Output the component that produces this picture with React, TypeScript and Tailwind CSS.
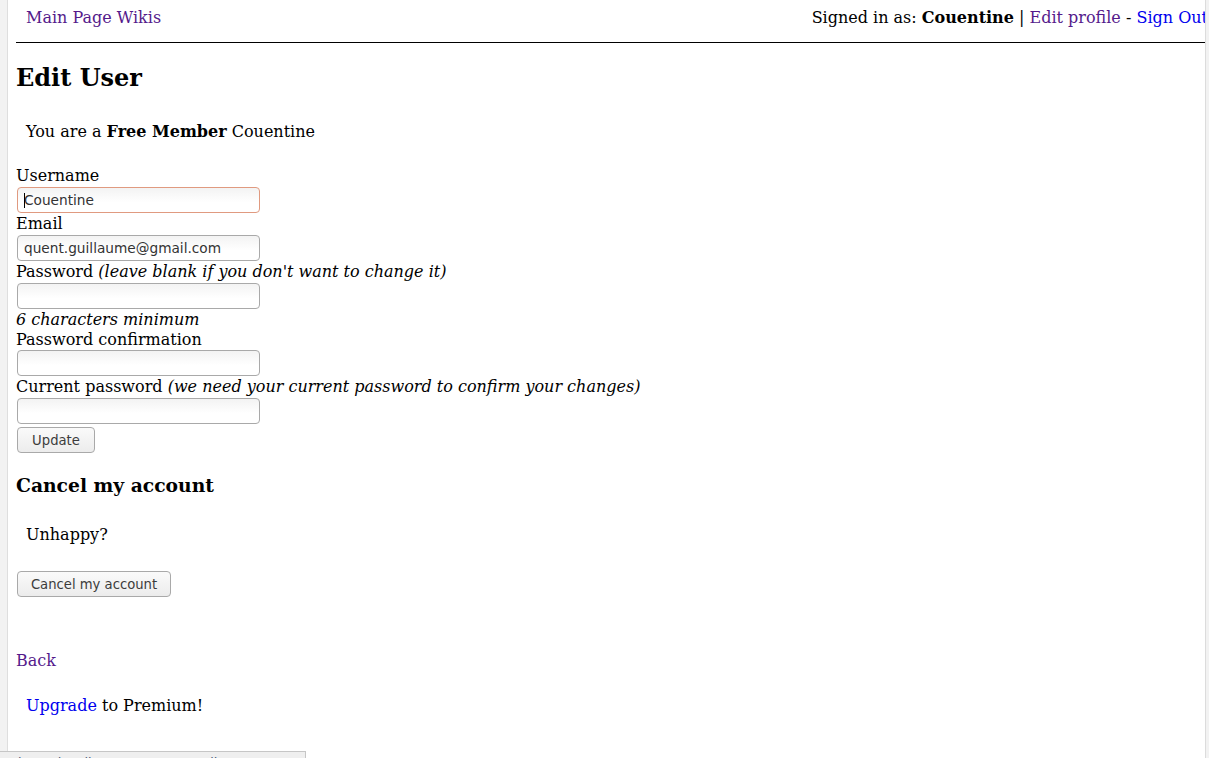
import React from 'react';

const Field: React.FC<{ value?: string; focused?: boolean }> = ({ value, focused }) => (
  <div
    className={`relative ml-[1px] h-[26px] w-[243px] rounded-[4px] border bg-[linear-gradient(#f3f3f3,#ffffff_60%)] pl-[6px] font-['DejaVu_Sans',sans-serif] text-[13.7px] leading-[25px] text-[#333] ${
      focused ? 'border-[#e09a80]' : 'border-[#a9a9a9]'
    }`}
  >
    {focused && <span className="absolute left-[6px] top-[5px] h-[15px] w-px bg-black" />}
    {value}
  </div>
);

const Button: React.FC<{ label: string; width: string }> = ({ label, width }) => (
  <div
    className={`ml-[1px] flex h-[26px] items-center justify-center rounded-[4px] border border-[#a9a9a9] bg-[linear-gradient(#fafafa,#ececec)] pt-[2px] font-['DejaVu_Sans',sans-serif] text-[13.2px] text-[#3c3c3c] ${width}`}
  >
    {label}
  </div>
);

export default function App() {
  return (
    <div className="relative flex h-[758px] overflow-hidden bg-white font-['DejaVu_Serif',serif] text-[16px] text-black">
      {/* bande gauche */}
      <div className="w-[8px] shrink-0 border-r border-[#dedede] bg-[#f2f2f2]" />

      <div className="min-w-0 flex-1 overflow-hidden pl-[8px]">
        {/* En-tête */}
        <div className="flex h-[43px] items-start justify-between border-b border-black pt-[8px] leading-[19px]">
          <a className="pl-[10px] text-[#551a8b]">Main Page Wikis</a>
          <span className="mr-[-3px] whitespace-nowrap">
            Signed in as: <b>Couentine</b> | <a className="text-[#551a8b]">Edit profile</a> -{' '}
            <a className="text-[#0000ee]">Sign Out</a>
          </span>
        </div>

        <h2 className="mt-[21px] text-[24px] font-bold leading-[28px]">Edit User</h2>

        <p className="mt-[30px] pl-[10px] leading-[19px]">
          You are a <b>Free Member</b> Couentine
        </p>

        {/* Formulaire */}
        <div className="mt-[24px]">
          <div className="leading-[22px]">Username</div>
          <Field value="Couentine" focused />
          <div className="leading-[22px]">Email</div>
          <Field value="quent.guillaume@gmail.com" />
          <div className="leading-[22px]">
            Password <i>(leave blank if you don't want to change it)</i>
          </div>
          <Field />
          <div className="leading-[21px]">
            <i>6 characters minimum</i>
          </div>
          <div className="leading-[20px]">Password confirmation</div>
          <Field />
          <div className="leading-[22px]">
            Current password <i>(we need your current password to confirm your changes)</i>
          </div>
          <Field />
          <div className="mt-[3px]">
            <Button label="Update" width="w-[78px]" />
          </div>
        </div>

        <h3 className="mt-[21px] text-[18.72px] font-bold leading-[22px]">Cancel my account</h3>
        <p className="mt-[29px] pl-[10px] leading-[19px]">Unhappy?</p>
        <div className="mt-[27px]">
          <Button label="Cancel my account" width="w-[154px]" />
        </div>

        <a className="mt-[54px] block leading-[19px] text-[#551a8b]">Back</a>
        <p className="mt-[26px] pl-[10px] leading-[19px]">
          <a className="text-[#0000ee]">Upgrade</a> to Premium!
        </p>
      </div>

      {/* bande droite */}
      <div className="w-[4px] shrink-0 border-l border-[#dcdcdc] bg-[#f2f2f2]" />

      {/* barre d'état */}
      <div className="absolute bottom-0 left-0 h-[7px] w-[306px] overflow-hidden border-r border-t border-[#c6c6c6] bg-[#efefef]">
        <span className="absolute left-[18px] top-[3px] whitespace-nowrap font-['DejaVu_Sans',sans-serif] text-[13px] leading-[15px] text-[#4a5a7a]">
          http://localhost:3000/users/edit
        </span>
      </div>
    </div>
  );
}
